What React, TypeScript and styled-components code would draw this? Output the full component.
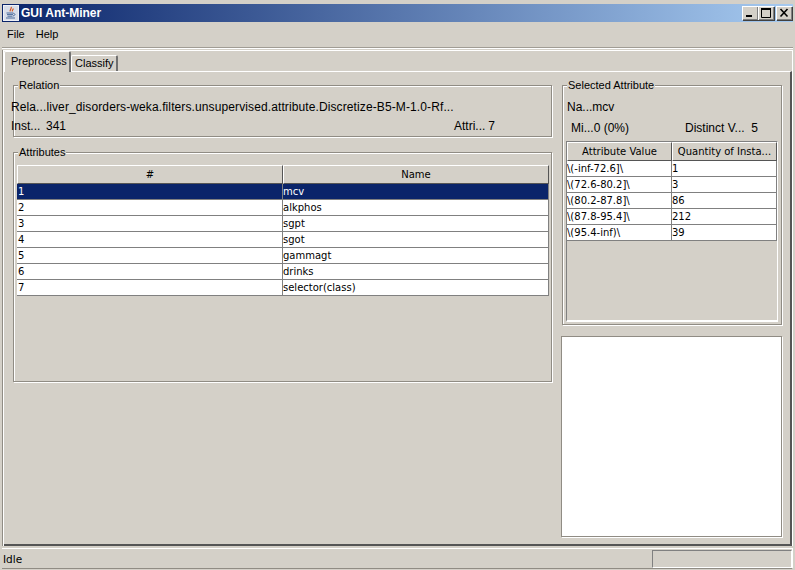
import styled, { createGlobalStyle } from 'styled-components'

const GlobalStyle = createGlobalStyle`
  html, body {
    margin: 0;
    padding: 0;
    background: #d4d0c8;
    overflow: hidden;
  }
`

const bevelUp = `box-shadow: inset 1px 1px 0 #fff, inset -1px -1px 0 #808080, 1px 1px 0 #404040;`

const Window = styled.div`
  width: 795px;
  height: 570px;
  box-sizing: border-box;
  padding: 4px 2px 0;
  background: #d4d0c8;
  display: flex;
  flex-direction: column;
  font-family: 'Liberation Sans', Arial, sans-serif;
  font-size: 12px;
  color: #000;
  overflow: hidden;
`

const TitleBar = styled.div`
  height: 18px;
  flex: none;
  display: flex;
  align-items: center;
  padding: 0 1px;
  background: linear-gradient(to right, #0a246a, #a6caf0);
`

const TitleText = styled.span`
  color: #fff;
  font-weight: bold;
  font-size: 12px;
  margin-left: 2px;
  flex: 1;
`

const WinButton = styled.button<{ $gap?: number }>`
  width: 16px;
  height: 14px;
  padding: 0;
  margin: 0 0 0 ${props => props.$gap ?? 0}px;
  border: none;
  background: #d4d0c8;
  ${bevelUp}
  display: flex;
  align-items: center;
  justify-content: center;
`

const MenuBar = styled.div`
  height: 26px;
  flex: none;
  display: flex;
  align-items: center;
  gap: 11px;
  padding: 0 0 2px 5px;
  box-sizing: border-box;
  border-bottom: 1px solid #a09c94;
  box-shadow: 0 1px 0 #fff;
`

const MenuItem = styled.span`
  font-size: 11px;
`

const TabArea = styled.div`
  flex: none;
  width: 790px;
  height: 496px;
  margin: 2px 0 0 1px;
  box-sizing: border-box;
  border-top: 1px solid #fff;
  border-left: 1px solid #fff;
  border-right: 1px solid #fff;
  box-shadow: -1px 0 0 #908c84;
`

const Tabs = styled.div`
  display: flex;
  align-items: flex-start;
  height: 21px;
  margin-bottom: -1px;
  position: relative;
  z-index: 1;
`

const Tab = styled.div<{ $active?: boolean }>`
  box-sizing: border-box;
  height: ${props => (props.$active ? 21 : 16)}px;
  width: ${props => (props.$active ? 67 : 47)}px;
  margin-top: ${props => (props.$active ? 0 : 4)}px;
  padding: ${props => (props.$active ? '3px 0 0 6px' : '1px 0 0 3px')};
  font-size: 11px;
  line-height: 13px;
  background: #d4d0c8;
  border-top: 1px solid #fff;
  border-left: 1px solid #fff;
  border-right: 2px solid #707070;
  border-top-left-radius: 2px;
  border-top-right-radius: 2px;
`

const Panel = styled.div`
  width: 788px;
  height: 475px;
  box-sizing: border-box;
  padding: 13px 0 0 9px;
  display: flex;
  gap: 10px;
  border-top: 1px solid #fff;
  border-right: 2px solid #555;
  border-bottom: 2px solid #555;
`

const LeftColumn = styled.div`
  width: 539px;
  flex: none;
  display: flex;
  flex-direction: column;
  gap: 15px;
`

const RightColumn = styled.div`
  width: 220px;
  flex: none;
  display: flex;
  flex-direction: column;
  gap: 11px;
`

const Group = styled.section<{ $height: number }>`
  position: relative;
  box-sizing: border-box;
  height: ${props => props.$height}px;
  flex: none;
  border: 1px solid #908c84;
  box-shadow: inset 1px 1px 0 #fff, 1px 1px 0 #fff;
`

const Legend = styled.span`
  position: absolute;
  top: -7px;
  left: 4px;
  padding: 0 1px;
  line-height: 13px;
  font-size: 11px;
  background: #d4d0c8;
`

const RelationBody = styled.div`
  padding-top: 14px;
  margin-left: -3px;
  display: flex;
  flex-direction: column;
  gap: 4px;
`

const InfoLine = styled.div`
  height: 15px;
  line-height: 15px;
  white-space: nowrap;
  letter-spacing: 0.11px;
`

const CountRow = styled.div`
  height: 15px;
  line-height: 15px;
  word-spacing: -0.5px;
  display: grid;
  grid-template-columns: 443px 1fr;
`

const AttributesBody = styled.div`
  padding: 12px 2px 0 3px;
`

const Table = styled.table`
  border-collapse: separate;
  border-spacing: 0;
  table-layout: fixed;
  width: 100%;
  font-family: 'DejaVu Sans', sans-serif;
  font-size: 10px;
`

const HeadCell = styled.th`
  height: 19px;
  padding: 0;
  font-weight: normal;
  background: #d4d0c8;
  box-sizing: border-box;
  border-top: 1px solid #fff;
  border-left: 1px solid #fff;
  border-right: 1px solid #555;
  border-bottom: 1px solid #555;
  white-space: nowrap;
  overflow: hidden;
`

const Cell = styled.td<{ $selected?: boolean; $indent?: number }>`
  height: 16px;
  padding: 0 0 0 ${props => props.$indent ?? 0}px;
  box-sizing: border-box;
  background: ${props => (props.$selected ? '#0a246a' : '#fff')};
  color: ${props => (props.$selected ? '#fff' : '#000')};
  border-right: 1px solid #808080;
  border-bottom: 1px solid #808080;
  white-space: nowrap;
  overflow: hidden;
  line-height: 14px;
`

const SelectedBody = styled.div`
  padding: 14px 3px 0;
  display: flex;
  flex-direction: column;
`

const NameLine = styled.div`
  height: 15px;
  line-height: 15px;
  padding-left: 1px;
  margin-bottom: 6px;
`

const StatsRow = styled.div`
  height: 15px;
  line-height: 15px;
  display: grid;
  grid-template-columns: 114px 1fr;
  padding-left: 5px;
  margin-bottom: 5px;
`

const ScrollFrame = styled.div`
  height: 181px;
  box-sizing: border-box;
  border-top: 1px solid #808080;
  border-left: 1px solid #808080;
  border-right: 1px solid #fff;
  border-bottom: 2px solid #fff;
`

const PlotBox = styled.div`
  height: 201px;
  flex: none;
  box-sizing: border-box;
  margin-left: -1px;
  background: #fff;
  border: 1px solid #908c84;
  box-shadow: 1px 1px 0 #fff;
`

const StatusBar = styled.div`
  flex: none;
  height: 21px;
  margin-top: 2px;
  width: 791px;
  box-sizing: border-box;
  display: flex;
  justify-content: space-between;
  border-top: 1px solid #fff;
  border-bottom: 1px solid #908c84;
  border-right: 1px solid #fff;
`

const StatusText = styled.span`
  font-family: 'DejaVu Sans', sans-serif;
  font-size: 10.5px;
  line-height: 21px;
  padding-left: 1px;
`

const StatusBox = styled.div`
  width: 140px;
  height: 18px;
  margin-top: 1px;
  box-sizing: border-box;
  border-top: 1px solid #808080;
  border-left: 1px solid #808080;
  border-right: 1px solid #fff;
  border-bottom: 1px solid #fff;
`

const attributes = ['mcv', 'alkphos', 'sgpt', 'sgot', 'gammagt', 'drinks', 'selector(class)']

const values = [
  ['\\(-inf-72.6]\\', '1'],
  ['\\(72.6-80.2]\\', '3'],
  ['\\(80.2-87.8]\\', '86'],
  ['\\(87.8-95.4]\\', '212'],
  ['\\(95.4-inf)\\', '39'],
]

function JavaIcon() {
  return (
    <svg width="16" height="16" viewBox="0 0 16 16">
      <rect x="0.5" y="0.5" width="15" height="15" fill="#d8dde8" stroke="#eef0f6" />
      <path d="M8 2c1.5 1.5-2 2.6-.6 4.4M10 3.5c.8 1-1.5 1.6-.6 3" fill="none" stroke="#d8541c" strokeWidth="1.2" />
      <path d="M3.5 8h7M4 9.6h6M4.5 11.2h5" stroke="#4a6a9c" strokeWidth="1" />
      <path d="M10.5 8.5c2 0 2 2-.5 2.4" fill="none" stroke="#4a6a9c" />
      <path d="M3 13h9" stroke="#4a6a9c" />
    </svg>
  )
}

function App() {
  return (
    <Window>
      <GlobalStyle />
      <TitleBar>
        <JavaIcon />
        <TitleText>GUI Ant-Miner</TitleText>
        <WinButton aria-label="Minimize">
          <svg width="14" height="12" viewBox="0 0 14 12">
            <rect x="3" y="8" width="6" height="2" fill="#000" />
          </svg>
        </WinButton>
        <WinButton aria-label="Maximize">
          <svg width="14" height="12" viewBox="0 0 14 12">
            <path d="M2.5 2.5h9v8h-9z" fill="none" stroke="#000" />
            <path d="M2 2h10" stroke="#000" strokeWidth="2" />
          </svg>
        </WinButton>
        <WinButton $gap={2} aria-label="Close">
          <svg width="14" height="12" viewBox="0 0 14 12">
            <path d="M3.5 2l7 7.5M10.5 2l-7 7.5" stroke="#000" strokeWidth="1.6" />
          </svg>
        </WinButton>
      </TitleBar>
      <MenuBar>
        <MenuItem>File</MenuItem>
        <MenuItem>Help</MenuItem>
      </MenuBar>
      <TabArea>
        <Tabs>
          <Tab $active>Preprocess</Tab>
          <Tab>Classify</Tab>
        </Tabs>
        <Panel>
          <LeftColumn>
            <Group $height={52}>
              <Legend>Relation</Legend>
              <RelationBody>
                <InfoLine>Rela...liver_disorders-weka.filters.unsupervised.attribute.Discretize-B5-M-1.0-Rf...</InfoLine>
                <CountRow>
                  <span>Inst...&nbsp; 341</span>
                  <span>Attri... 7</span>
                </CountRow>
              </RelationBody>
            </Group>
            <Group $height={230}>
              <Legend>Attributes</Legend>
              <AttributesBody>
                <Table>
                  <thead>
                    <tr>
                      <HeadCell>#</HeadCell>
                      <HeadCell>Name</HeadCell>
                    </tr>
                  </thead>
                  <tbody>
                    {attributes.map((name, i) => (
                      <tr key={name}>
                        <Cell $selected={i === 0} $indent={1}>{i + 1}</Cell>
                        <Cell $selected={i === 0}>{name}</Cell>
                      </tr>
                    ))}
                  </tbody>
                </Table>
              </AttributesBody>
            </Group>
          </LeftColumn>
          <RightColumn>
            <Group $height={240}>
              <Legend>Selected Attribute</Legend>
              <SelectedBody>
                <NameLine>Na...mcv</NameLine>
                <StatsRow>
                  <span>Mi...0 (0%)</span>
                  <span>Distinct V...&nbsp; 5</span>
                </StatsRow>
                <ScrollFrame>
                  <Table>
                    <colgroup>
                      <col style={{ width: 105 }} />
                      <col />
                    </colgroup>
                    <thead>
                      <tr>
                        <HeadCell>Attribute Value</HeadCell>
                        <HeadCell>Quantity of Insta...</HeadCell>
                      </tr>
                    </thead>
                    <tbody>
                      {values.map(([label, count]) => (
                        <tr key={label}>
                          <Cell>{label}</Cell>
                          <Cell>{count}</Cell>
                        </tr>
                      ))}
                    </tbody>
                  </Table>
                </ScrollFrame>
              </SelectedBody>
            </Group>
            <PlotBox />
          </RightColumn>
        </Panel>
      </TabArea>
      <StatusBar>
        <StatusText>Idle</StatusText>
        <StatusBox />
      </StatusBar>
    </Window>
  )
}

export default App
